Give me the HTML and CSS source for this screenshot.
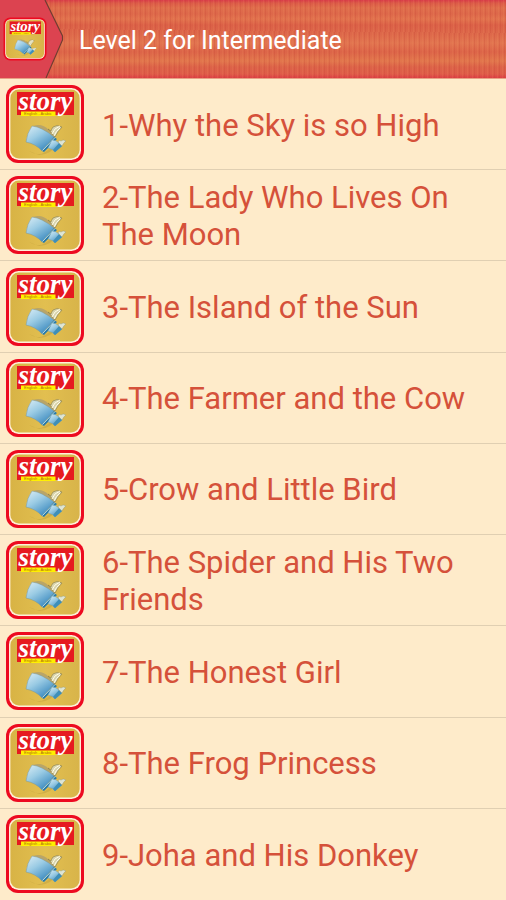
FILE: index.html
```
<!DOCTYPE html>
<html lang="en">

<head>
  <meta charset="UTF-8">
  <meta name="viewport" content="width=device-width, initial-scale=1.0">
  <title>Level 2 for Intermediate</title>
  <link rel="stylesheet" href="styles.css">
</head>

<body>
  <svg class="sprite" aria-hidden="true">
    <defs>
      <linearGradient id="bookBlue" x1="0" y1="0" x2="0.7" y2="1">
        <stop offset="0" stop-color="#dceef6"/>
        <stop offset="0.45" stop-color="#9acbe4"/>
        <stop offset="1" stop-color="#3686bd"/>
      </linearGradient>
      <linearGradient id="gold" x1="0" y1="0" x2="1" y2="0">
        <stop offset="0" stop-color="#d8b345"/>
        <stop offset="0.5" stop-color="#e2bf50"/>
        <stop offset="1" stop-color="#d8b44a"/>
      </linearGradient>
    </defs>
    <symbol id="story" viewBox="0 0 80 80">
      <rect x="1" y="1" width="78" height="78" rx="12" fill="#ed0a20"/>
      <rect x="4" y="4" width="72" height="72" rx="9.5" fill="#fff0d8"/>
      <rect x="5.4" y="5.4" width="69.2" height="69.2" rx="8.5" fill="url(#gold)"/>
      <path d="M12 8H69V31H12Z" fill="#e61a20"/>
      <path d="M16 27.500H50.500V32H16Z" fill="#fff000"/>
      <text x="19" y="31" class="mini-text">English - Arabic</text>
      <text x="13.500" y="26" class="logo-text">story</text>
      <path d="M24 67Q33 73 40 68L52 60Q46 71 34 71Z" fill="#a98b32" opacity="0.3"/>
      <path d="M28 42Q37 39 44 46L51 53L48 55L30 44Z" fill="#b9a567"/>
      <path d="M43 45Q45 47 50 53Q53 47 57 43Q52 40 48 43Q46 46 46 47Z" fill="#d9d5ad" stroke="#867a45" stroke-width="0.6"/>
      <path d="M47 50Q49 44 55 42M49 52Q51 47 55 44" fill="none" stroke="#fffbe8" stroke-width="1"/>
      <path d="M27 42Q37 43 49 53L37 67Q31 60 21 58Q22 49 27 42Z" fill="url(#bookBlue)" stroke="#7c9695" stroke-width="0.5"/>
      <path d="M49 53L52 55L39 68L37 67Z" fill="#297ba9"/>
      <path d="M37.500 66.500L50 53.500" stroke="#d7edf0" stroke-width="0.8"/>
      <path d="M47 56Q51 56 54 59L57 62L50 68Q48 65 43 64Z" fill="url(#bookBlue)" stroke="#6a9aa8" stroke-width="0.4"/>
      <path d="M54 59L57 62L50 68L48 66Z" fill="#3f8fb8"/>
      <path d="M53 58Q54 55 56 57Q58 55 61 57Q59 58 57 62Z" fill="#dfe5d4" stroke="#8c9270" stroke-width="0.4"/>
    </symbol>
  </svg>

  <header class="topbar">
    <div class="home">
      <svg class="home-arrow" viewBox="0 0 66 78" preserveAspectRatio="none" aria-hidden="true">
        <path d="M0 0H45L63 38L46 78H0Z" fill="#dc4350"/>
        <path d="M45 0L62.500 36V40L46 78" fill="none" stroke="#713c31" stroke-width="1.200"/>
      </svg>
      <svg class="home-icon" role="img" aria-label="Story"><use href="#story"/></svg>
    </div>
    <h1 class="title">Level 2 for Intermediate</h1>
  </header>

  <ul class="stories">
    <li class="story"><svg class="story-icon" aria-hidden="true"><use href="#story"/></svg><span class="story-name">1-Why the Sky is so High</span></li>
    <li class="story"><svg class="story-icon" aria-hidden="true"><use href="#story"/></svg><span class="story-name">2-The Lady Who Lives On The Moon</span></li>
    <li class="story"><svg class="story-icon" aria-hidden="true"><use href="#story"/></svg><span class="story-name">3-The Island of the Sun</span></li>
    <li class="story"><svg class="story-icon" aria-hidden="true"><use href="#story"/></svg><span class="story-name">4-The Farmer and the Cow</span></li>
    <li class="story"><svg class="story-icon" aria-hidden="true"><use href="#story"/></svg><span class="story-name">5-Crow and Little Bird</span></li>
    <li class="story"><svg class="story-icon" aria-hidden="true"><use href="#story"/></svg><span class="story-name">6-The Spider and His Two Friends</span></li>
    <li class="story"><svg class="story-icon" aria-hidden="true"><use href="#story"/></svg><span class="story-name">7-The Honest Girl</span></li>
    <li class="story"><svg class="story-icon" aria-hidden="true"><use href="#story"/></svg><span class="story-name">8-The Frog Princess</span></li>
    <li class="story"><svg class="story-icon" aria-hidden="true"><use href="#story"/></svg><span class="story-name">9-Joha and His Donkey</span></li>
  </ul>
</body>

</html>
```

FILE: styles.css
```
* {
  box-sizing: border-box;
}

body {
  margin: 0;
  min-height: 100vh;
  display: flex;
  flex-direction: column;
  background-color: #feebca;
  font-family: Roboto, sans-serif;
}

.sprite {
  position: absolute;
  width: 0;
  height: 0;
}

/* Header */
.topbar {
  display: flex;
  align-items: center;
  gap: 13px;
  height: 79px;
  border-bottom: 1px solid #e9a184;
  background:
    repeating-linear-gradient(91deg, rgba(190, 60, 45, 0.2) 0 1px, transparent 1px 3px, rgba(240, 150, 95, 0.15) 3px 4px, transparent 4px 5px),
    linear-gradient(#d93c4a 0, #dc5a48 3px, #e06e4c 8px, #dd674a 14px, #e2734e 19px, #db6047 25px, #dd684a 34px, #e27550 43px, #dc6448 52px, #e2774d 61px, #dc6248 67px, #df5c49 74px, #dc3f45 78px);
}

.home {
  position: relative;
  display: flex;
  align-items: center;
  width: 66px;
  height: 78px;
  padding-left: 3px;
}

.home-arrow {
  position: absolute;
  top: 0;
  left: 0;
  width: 100%;
  height: 100%;
}

.home-icon {
  position: relative;
  width: 44px;
  height: 44px;
}

.title {
  margin: 0;
  padding-top: 4px;
  color: #fff;
  font-size: 25px;
  font-weight: 400;
  line-height: 32px;
}

/* List */
.stories {
  flex: 1;
  display: grid;
  grid-auto-rows: 1fr;
  margin: 0;
  padding: 0;
  list-style: none;
}

.story {
  display: flex;
  align-items: center;
  gap: 17px;
  min-height: 90px;
  padding: 0 32px 0 5px;
  border-bottom: 1px solid #e0cfb2;
}

.story:last-child {
  border-bottom: none;
}

.story-icon {
  flex: none;
  width: 80px;
  height: 80px;
}

.story-name {
  padding-top: 2px;
  color: #d5513a;
  font-size: 31px;
  line-height: 37px;
}

.logo-text {
  fill: #fff;
  font-family: "Liberation Serif", serif;
  font-size: 27px;
  font-style: italic;
  font-weight: bold;
}

.mini-text {
  fill: #b06a12;
  font-family: "Liberation Sans", sans-serif;
  font-size: 4px;
}
```
